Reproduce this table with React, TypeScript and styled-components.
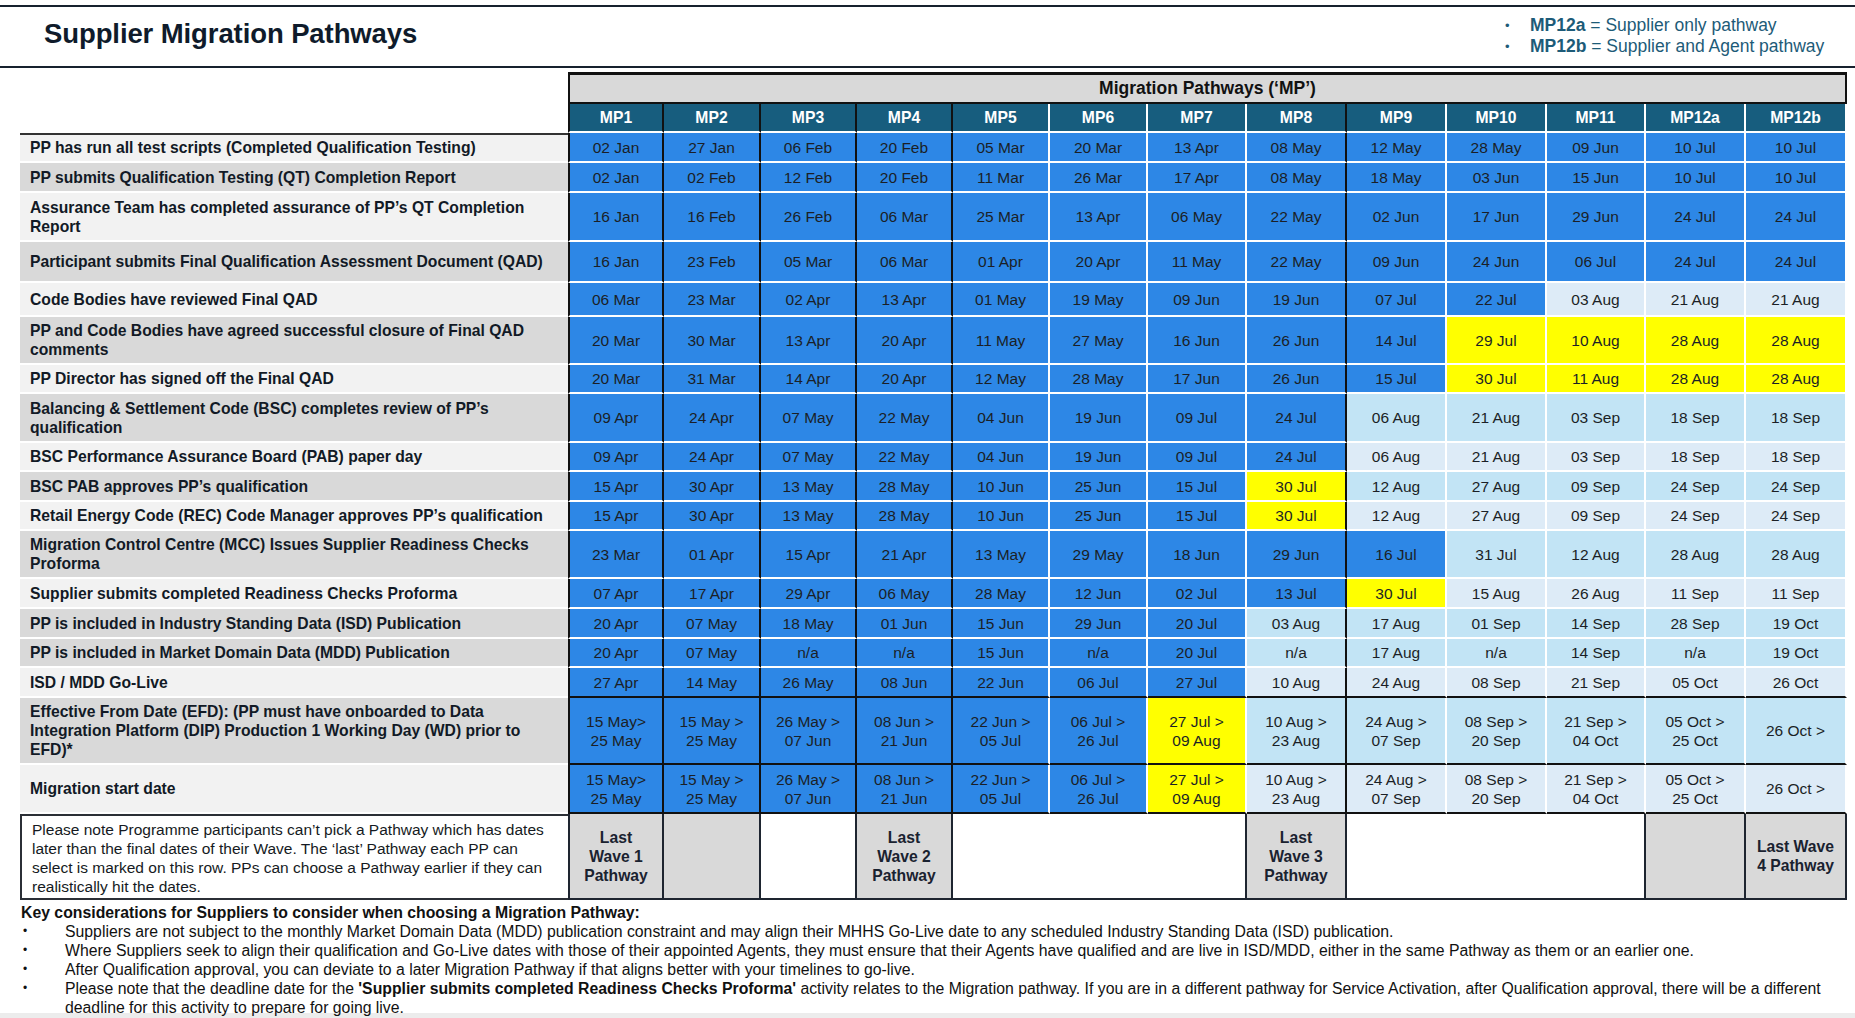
import React from 'react';
import styled, { createGlobalStyle, css } from 'styled-components';

const GlobalStyle = createGlobalStyle`
  html, body {
    margin: 0;
    padding: 0;
    background: #ffffff;
  }
  body {
    font-family: "Liberation Sans", Arial, Helvetica, sans-serif;
    color: #121a26;
    overflow: hidden;
  }
`;

type Tone = 'blue' | 'light' | 'yellow';

const COLUMNS = ['MP1', 'MP2', 'MP3', 'MP4', 'MP5', 'MP6', 'MP7', 'MP8', 'MP9', 'MP10', 'MP11', 'MP12a', 'MP12b'];
const COLUMN_WIDTHS = [96, 97, 96, 96, 97, 98, 99, 100, 100, 100, 99, 100, 101];
const DARK_RIGHT = [0, 1, 2, 3, 7];

interface Milestone {
  label: string[];
  dates: string[];
  blue: number;
  yellow?: number[];
  dark: boolean;
  height: number;
  ruleBelow?: boolean;
  topRule?: boolean;
}

const window2 = [
  '15 May>\n25 May',
  '15 May >\n25 May',
  '26 May >\n07 Jun',
  '08 Jun >\n21 Jun',
  '22 Jun >\n05 Jul',
  '06 Jul >\n26 Jul',
  '27 Jul >\n09 Aug',
  '10 Aug >\n23 Aug',
  '24 Aug >\n07 Sep',
  '08 Sep >\n20 Sep',
  '21 Sep >\n04 Oct',
  '05 Oct >\n25 Oct',
  '26 Oct >',
];

const MILESTONES: Milestone[] = [
  {
    label: ['PP has run all test scripts (Completed Qualification Testing)'],
    dates: ['02 Jan', '27 Jan', '06 Feb', '20 Feb', '05 Mar', '20 Mar', '13 Apr', '08 May', '12 May', '28 May', '09 Jun', '10 Jul', '10 Jul'],
    blue: 13, dark: false, height: 30, topRule: true,
  },
  {
    label: ['PP submits Qualification Testing (QT) Completion Report'],
    dates: ['02 Jan', '02 Feb', '12 Feb', '20 Feb', '11 Mar', '26 Mar', '17 Apr', '08 May', '18 May', '03 Jun', '15 Jun', '10 Jul', '10 Jul'],
    blue: 13, dark: true, height: 30,
  },
  {
    label: ['Assurance Team has completed assurance of PP’s QT Completion', 'Report'],
    dates: ['16 Jan', '16 Feb', '26 Feb', '06 Mar', '25 Mar', '13 Apr', '06 May', '22 May', '02 Jun', '17 Jun', '29 Jun', '24 Jul', '24 Jul'],
    blue: 13, dark: false, height: 49,
  },
  {
    label: ['Participant submits Final Qualification Assessment Document (QAD)'],
    dates: ['16 Jan', '23 Feb', '05 Mar', '06 Mar', '01 Apr', '20 Apr', '11 May', '22 May', '09 Jun', '24 Jun', '06 Jul', '24 Jul', '24 Jul'],
    blue: 13, dark: true, height: 41,
  },
  {
    label: ['Code Bodies have reviewed Final QAD'],
    dates: ['06 Mar', '23 Mar', '02 Apr', '13 Apr', '01 May', '19 May', '09 Jun', '19 Jun', '07 Jul', '22 Jul', '03 Aug', '21 Aug', '21 Aug'],
    blue: 10, dark: false, height: 34,
  },
  {
    label: ['PP and Code Bodies have agreed successful closure of Final QAD', 'comments'],
    dates: ['20 Mar', '30 Mar', '13 Apr', '20 Apr', '11 May', '27 May', '16 Jun', '26 Jun', '14 Jul', '29 Jul', '10 Aug', '28 Aug', '28 Aug'],
    blue: 9, yellow: [9, 10, 11, 12], dark: true, height: 48,
  },
  {
    label: ['PP Director has signed off the Final QAD'],
    dates: ['20 Mar', '31 Mar', '14 Apr', '20 Apr', '12 May', '28 May', '17 Jun', '26 Jun', '15 Jul', '30 Jul', '11 Aug', '28 Aug', '28 Aug'],
    blue: 9, yellow: [9, 10, 11, 12], dark: false, height: 29,
  },
  {
    label: ['Balancing & Settlement Code (BSC) completes review of PP’s', 'qualification'],
    dates: ['09 Apr', '24 Apr', '07 May', '22 May', '04 Jun', '19 Jun', '09 Jul', '24 Jul', '06 Aug', '21 Aug', '03 Sep', '18 Sep', '18 Sep'],
    blue: 8, dark: true, height: 49,
  },
  {
    label: ['BSC Performance Assurance Board (PAB) paper day'],
    dates: ['09 Apr', '24 Apr', '07 May', '22 May', '04 Jun', '19 Jun', '09 Jul', '24 Jul', '06 Aug', '21 Aug', '03 Sep', '18 Sep', '18 Sep'],
    blue: 8, dark: false, height: 29,
  },
  {
    label: ['BSC PAB approves PP’s qualification'],
    dates: ['15 Apr', '30 Apr', '13 May', '28 May', '10 Jun', '25 Jun', '15 Jul', '30 Jul', '12 Aug', '27 Aug', '09 Sep', '24 Sep', '24 Sep'],
    blue: 7, yellow: [7], dark: true, height: 30,
  },
  {
    label: ['Retail Energy Code (REC) Code Manager approves PP’s qualification'],
    dates: ['15 Apr', '30 Apr', '13 May', '28 May', '10 Jun', '25 Jun', '15 Jul', '30 Jul', '12 Aug', '27 Aug', '09 Sep', '24 Sep', '24 Sep'],
    blue: 7, yellow: [7], dark: false, height: 29,
  },
  {
    label: ['Migration Control Centre (MCC) Issues Supplier Readiness Checks', 'Proforma'],
    dates: ['23 Mar', '01 Apr', '15 Apr', '21 Apr', '13 May', '29 May', '18 Jun', '29 Jun', '16 Jul', '31 Jul', '12 Aug', '28 Aug', '28 Aug'],
    blue: 9, dark: true, height: 48,
  },
  {
    label: ['Supplier submits completed Readiness Checks Proforma'],
    dates: ['07 Apr', '17 Apr', '29 Apr', '06 May', '28 May', '12 Jun', '02 Jul', '13 Jul', '30 Jul', '15 Aug', '26 Aug', '11 Sep', '11 Sep'],
    blue: 8, yellow: [8], dark: false, height: 30,
  },
  {
    label: ['PP is included in Industry Standing Data (ISD) Publication'],
    dates: ['20 Apr', '07 May', '18 May', '01 Jun', '15 Jun', '29 Jun', '20 Jul', '03 Aug', '17 Aug', '01 Sep', '14 Sep', '28 Sep', '19 Oct'],
    blue: 7, dark: true, height: 30,
  },
  {
    label: ['PP is included in Market Domain Data (MDD) Publication'],
    dates: ['20 Apr', '07 May', 'n/a', 'n/a', '15 Jun', 'n/a', '20 Jul', 'n/a', '17 Aug', 'n/a', '14 Sep', 'n/a', '19 Oct'],
    blue: 7, dark: true, height: 29,
  },
  {
    label: ['ISD / MDD Go-Live'],
    dates: ['27 Apr', '14 May', '26 May', '08 Jun', '22 Jun', '06 Jul', '27 Jul', '10 Aug', '24 Aug', '08 Sep', '21 Sep', '05 Oct', '26 Oct'],
    blue: 7, dark: false, height: 30, ruleBelow: true,
  },
  {
    label: [
      'Effective From Date (EFD): (PP must have onboarded to Data',
      'Integration Platform (DIP) Production 1 Working Day (WD) prior to',
      'EFD)*',
    ],
    dates: window2,
    blue: 6, yellow: [6], dark: true, height: 67, ruleBelow: true,
  },
  {
    label: ['Migration start date'],
    dates: window2,
    blue: 6, yellow: [6], dark: false, height: 49, ruleBelow: true,
  },
];

const toneOf = (m: Milestone, col: number): Tone => {
  if (m.yellow && m.yellow.includes(col)) return 'yellow';
  return col < m.blue ? 'blue' : 'light';
};

const Page = styled.div`
  width: 1855px;
  height: 1018px;
  box-sizing: border-box;
  padding-top: 5px;
  display: flex;
  flex-direction: column;
  overflow: hidden;
  background: linear-gradient(to top, #ececec 5px, #ffffff 5px);
`;

const Header = styled.header`
  flex-shrink: 0;
  height: 63px;
  box-sizing: border-box;
  border-top: 2px solid #17212e;
  border-bottom: 2px solid #17212e;
  display: flex;
  align-items: flex-start;
  justify-content: space-between;
  padding-left: 44px;
`;

const Title = styled.h1`
  margin: 11px 0 0;
  font-size: 27.5px;
  line-height: 32px;
  font-weight: 700;
  letter-spacing: -0.1px;
  color: #0f1b2b;
`;

const Legend = styled.ul`
  list-style: none;
  margin: 8px 0 0;
  padding: 0;
  width: 350px;
  color: #1d5b78;
  font-size: 17.5px;
  line-height: 21px;
`;

const LegendItem = styled.li`
  display: flex;
  align-items: center;

  &::before {
    content: '•';
    width: 25px;
    font-size: 13px;
  }

  b {
    font-weight: 700;
  }
`;

const Grid = styled.div`
  flex-shrink: 0;
  display: grid;
  grid-template-columns: 548px ${COLUMN_WIDTHS.map((w) => `${w}px`).join(' ')};
  grid-template-rows: 32px 29px ${MILESTONES.map((m) => `${m.height}px`).join(' ')} 86px;
  margin: 4px 0 0 20px;
  width: max-content;
`;

const Corner = styled.div`
  grid-column: 1;
  grid-row: 1 / span 2;
`;

const GroupHeader = styled.div`
  grid-column: 2 / span 13;
  box-sizing: border-box;
  background: #d9d9d9;
  border: 2px solid #111111;
  border-top-width: 3px;
  display: flex;
  align-items: center;
  justify-content: center;
  font-size: 17.5px;
  font-weight: 700;
  color: #111111;
`;

const ruleRight = (dark: boolean) => css`
  border-right: 2px solid ${dark ? '#111111' : '#ffffff'};
`;

const ColumnHead = styled.div<{ $darkRight: boolean; $first: boolean }>`
  box-sizing: border-box;
  background: #175d7e;
  color: #ffffff;
  font-weight: 700;
  font-size: 15.7px;
  display: flex;
  align-items: center;
  justify-content: center;
  border-bottom: 2px solid #ffffff;
  ${({ $darkRight }) => ruleRight($darkRight)}
  ${({ $first }) => $first && 'border-left: 2px solid #111111;'}
`;

const LabelCell = styled.div<{ $dark: boolean; $topRule?: boolean }>`
  box-sizing: border-box;
  background: ${({ $dark }) => ($dark ? '#d9d9d9' : '#f2f2f2')};
  border-bottom: 2px solid #ffffff;
  ${({ $topRule }) => $topRule && 'box-shadow: inset 0 2px 0 #333333;'}
  padding: 0 10px;
  display: flex;
  flex-direction: column;
  justify-content: center;
  font-size: 15.7px;
  line-height: 19px;
  font-weight: 700;
  white-space: nowrap;
  color: #121a26;
`;

const toneBg = (tone: Tone, dark: boolean) => {
  if (tone === 'blue') return '#2d87e6';
  if (tone === 'yellow') return '#ffff00';
  return dark ? '#c2e4f5' : '#ddebf7';
};

const DateCell = styled.div<{
  $tone: Tone;
  $dark: boolean;
  $darkRight: boolean;
  $first: boolean;
  $ruleBelow?: boolean;
}>`
  box-sizing: border-box;
  background: ${({ $tone, $dark }) => toneBg($tone, $dark)};
  border-bottom: 2px solid ${({ $ruleBelow }) => ($ruleBelow ? '#111111' : '#ffffff')};
  ${({ $darkRight }) => ruleRight($darkRight)}
  ${({ $first }) => $first && 'border-left: 2px solid #111111;'}
  display: flex;
  align-items: center;
  justify-content: center;
  text-align: center;
  white-space: pre-line;
  font-size: 15.5px;
  line-height: 19px;
  color: #1b1f26;
`;

const NoteCell = styled.div`
  grid-column: 1;
  box-sizing: border-box;
  border: 2px solid #2b2f36;
  border-right: none;
  padding: 4px 10px 0;
  font-size: 15.5px;
  line-height: 19px;
  color: #151a22;
  white-space: nowrap;
`;

const WaveCell = styled.div<{ $span?: number; $shaded: boolean; $first?: boolean }>`
  grid-column: span ${({ $span }) => $span ?? 1};
  box-sizing: border-box;
  background: ${({ $shaded }) => ($shaded ? '#d9d9d9' : '#ffffff')};
  border-right: 2px solid #1e2530;
  border-bottom: 2px solid #1e2530;
  ${({ $first }) => $first && 'border-left: 2px solid #1e2530;'}
  display: flex;
  align-items: center;
  justify-content: center;
  text-align: center;
  font-size: 15.7px;
  line-height: 19px;
  font-weight: 700;
  color: #1a2230;
`;

const KeySection = styled.section`
  margin: 3px 0 0 21px;
  font-size: 15.8px;
  line-height: 19.1px;
  color: #111111;
`;

const KeyTitle = styled.div`
  font-weight: 700;
`;

const KeyList = styled.ul`
  list-style: none;
  margin: 0;
  padding: 0;
`;

const KeyItem = styled.li`
  display: grid;
  grid-template-columns: 44px 1fr;

  &::before {
    content: '•';
    font-size: 12px;
    padding-left: 2px;
  }

  b {
    font-weight: 700;
  }
`;

const Lines: React.FC<{ lines: string[] }> = ({ lines }) => (
  <>
    {lines.map((line, i) => (
      <span key={i}>{line}</span>
    ))}
  </>
);

const WAVE_CELLS: { text?: string[]; span?: number; shaded: boolean }[] = [
  { text: ['Last', 'Wave 1', 'Pathway'], shaded: true },
  { shaded: true },
  { shaded: false },
  { text: ['Last', 'Wave 2', 'Pathway'], shaded: true },
  { span: 3, shaded: false },
  { text: ['Last', 'Wave 3', 'Pathway'], shaded: true },
  { span: 3, shaded: false },
  { shaded: true },
  { text: ['Last Wave', '4 Pathway'], shaded: true },
];

const App: React.FC = () => (
  <>
    <GlobalStyle />
    <Page>
      <Header>
        <Title>Supplier Migration Pathways</Title>
        <Legend>
          <LegendItem>
            <span>
              <b>MP12a</b> = Supplier only pathway
            </span>
          </LegendItem>
          <LegendItem>
            <span>
              <b>MP12b</b> = Supplier and Agent pathway
            </span>
          </LegendItem>
        </Legend>
      </Header>

      <Grid>
        <Corner />
        <GroupHeader>Migration Pathways (‘MP’)</GroupHeader>
        {COLUMNS.map((c, i) => (
          <ColumnHead key={c} $first={i === 0} $darkRight={DARK_RIGHT.includes(i)}>
            {c}
          </ColumnHead>
        ))}

        {MILESTONES.map((m, r) => (
          <React.Fragment key={r}>
            <LabelCell $dark={m.dark} $topRule={m.topRule}>
              <Lines lines={m.label} />
            </LabelCell>
            {m.dates.map((d, i) => (
              <DateCell
                key={i}
                $tone={toneOf(m, i)}
                $dark={m.dark}
                $first={i === 0}
                $darkRight={DARK_RIGHT.includes(i)}
                $ruleBelow={m.ruleBelow}
              >
                {d}
              </DateCell>
            ))}
          </React.Fragment>
        ))}

        <NoteCell>
          Please note Programme participants can’t pick a Pathway which has dates
          <br />
          later than the final dates of their Wave. The ‘last’ Pathway each PP can
          <br />
          select is marked on this row. PPs can choose a Pathway earlier if they can
          <br />
          realistically hit the dates.
        </NoteCell>
        {WAVE_CELLS.map((w, i) => (
          <WaveCell key={i} $span={w.span} $shaded={w.shaded} $first={i === 0}>
            {w.text && (
              <div>
                {w.text.map((t, j) => (
                  <div key={j}>{t}</div>
                ))}
              </div>
            )}
          </WaveCell>
        ))}
      </Grid>

      <KeySection>
        <KeyTitle>Key considerations for Suppliers to consider when choosing a Migration Pathway:</KeyTitle>
        <KeyList>
          <KeyItem>
            <span>
              Suppliers are not subject to the monthly Market Domain Data (MDD) publication constraint and may align their
              MHHS Go-Live date to any scheduled Industry Standing Data (ISD) publication.
            </span>
          </KeyItem>
          <KeyItem>
            <span>
              Where Suppliers seek to align their qualification and Go-Live dates with those of their appointed Agents, they
              must ensure that their Agents have qualified and are live in ISD/MDD, either in the same Pathway as them or an
              earlier one.
            </span>
          </KeyItem>
          <KeyItem>
            <span>
              After Qualification approval, you can deviate to a later Migration Pathway if that aligns better with your
              timelines to go-live.
            </span>
          </KeyItem>
          <KeyItem>
            <span>
              Please note that the deadline date for the <b>'Supplier submits completed Readiness Checks Proforma'</b>{' '}
              activity relates to the Migration pathway. If you are in a different pathway for Service Activation, after
              Qualification approval, there will be a different
              <br />
              deadline for this activity to prepare for going live.
            </span>
          </KeyItem>
        </KeyList>
      </KeySection>
    </Page>
  </>
);

export default App;
